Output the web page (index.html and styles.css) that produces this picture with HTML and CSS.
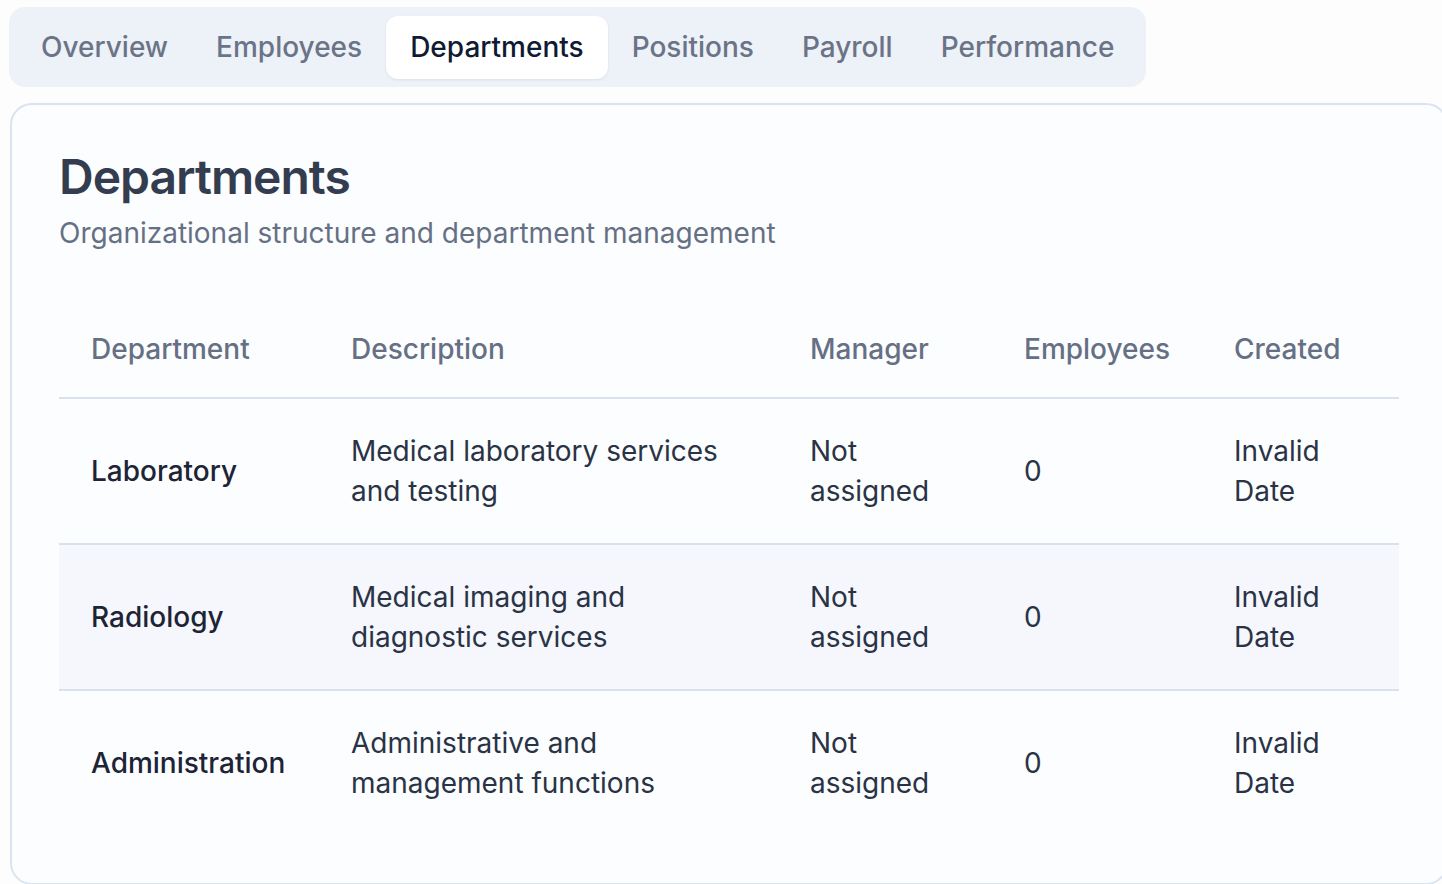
FILE: index.html
```html
<!DOCTYPE html>
<html lang="en">
<head>
<meta charset="utf-8">
<title>Departments</title>
<link rel="stylesheet" href="styles.css">
</head>
<body>
<div class="page">
  <nav class="tabs">
    <span class="tab">Overview</span>
    <span class="tab">Employees</span>
    <span class="tab active">Departments</span>
    <span class="tab">Positions</span>
    <span class="tab">Payroll</span>
    <span class="tab">Performance</span>
  </nav>
  <section class="card">
    <header class="card-header">
      <h1 class="title">Departments</h1>
      <p class="subtitle">Organizational structure and department management</p>
    </header>
    <div class="card-content">
      <table class="table">
        <colgroup>
          <col class="c-dept"><col class="c-desc"><col class="c-mgr"><col class="c-emp"><col class="c-created">
        </colgroup>
        <thead>
          <tr>
            <th>Department</th>
            <th>Description</th>
            <th>Manager</th>
            <th>Employees</th>
            <th>Created</th>
          </tr>
        </thead>
        <tbody>
          <tr>
            <td class="name">Laboratory</td>
            <td>Medical laboratory services and testing</td>
            <td>Not assigned</td>
            <td>0</td>
            <td>Invalid Date</td>
          </tr>
          <tr class="alt">
            <td class="name">Radiology</td>
            <td>Medical imaging and diagnostic services</td>
            <td>Not assigned</td>
            <td>0</td>
            <td>Invalid Date</td>
          </tr>
          <tr>
            <td class="name">Administration</td>
            <td>Administrative and management functions</td>
            <td>Not assigned</td>
            <td>0</td>
            <td>Invalid Date</td>
          </tr>
        </tbody>
      </table>
    </div>
  </section>
</div>
</body>
</html>
```

FILE: styles.css
```css
html, body {
  margin: 0;
  padding: 0;
  overflow: hidden;
  background: #fdfdfe;
  font-family: Inter, "Noto Sans", sans-serif;
  color: #1e293b;
}

.page {
  padding: 7px 0 0 9px;
  width: 1440px;
}

.tabs {
  display: inline-flex;
  align-items: center;
  height: 80px;
  box-sizing: border-box;
  padding: 8px;
  background: #edf1f8;
  border-radius: 16px;
}

.tab {
  display: flex;
  align-items: center;
  height: 63px;
  padding: 0 24px;
  font-size: 28px;
  font-weight: 500;
  color: #6b7487;
  border-radius: 12px;
}

.tab.active {
  background: #ffffff;
  color: #0f1a33;
  box-shadow: 0 1px 3px rgba(15, 23, 42, 0.08);
}

.card {
  margin-top: 16px;
  margin-left: 1px;
  width: 1438px;
  box-sizing: border-box;
  background: #fcfdfe;
  border: 2px solid #dae3f0;
  border-radius: 22px;
}

.card-header {
  padding: 48px 48px 48px 47px;
  display: flex;
  flex-direction: column;
  gap: 12px;
}

.title {
  margin: 0;
  font-size: 48px;
  line-height: 48px;
  font-weight: 600;
  letter-spacing: -1px;
  color: #333d4f;
}

.subtitle {
  margin: 0;
  font-size: 28px;
  line-height: 40px;
  color: #667085;
}

.card-content {
  padding: 0 48px 48px 47px;
}

.table {
  width: 1340px;
  border-collapse: collapse;
  table-layout: fixed;
  font-size: 28px;
  line-height: 40px;
}

.c-dept { width: 260px; }
.c-desc { width: 459px; }
.c-mgr { width: 214px; }
.c-emp { width: 210px; }
.c-created { width: 197px; }

.table th {
  height: 96px;
  padding: 0 32px;
  text-align: left;
  font-weight: 500;
  color: #667085;
  vertical-align: middle;
  border-bottom: 2px solid #d8e1ee;
}

.table td {
  padding: 32px;
  vertical-align: middle;
  color: #2a3345;
  border-bottom: 2px solid #d8e1ee;
}

.table tbody tr:last-child td {
  border-bottom: none;
}

.table tr.alt td {
  background: #f5f7fc;
}

.table td.name {
  font-weight: 500;
  color: #1c2436;
}
```
